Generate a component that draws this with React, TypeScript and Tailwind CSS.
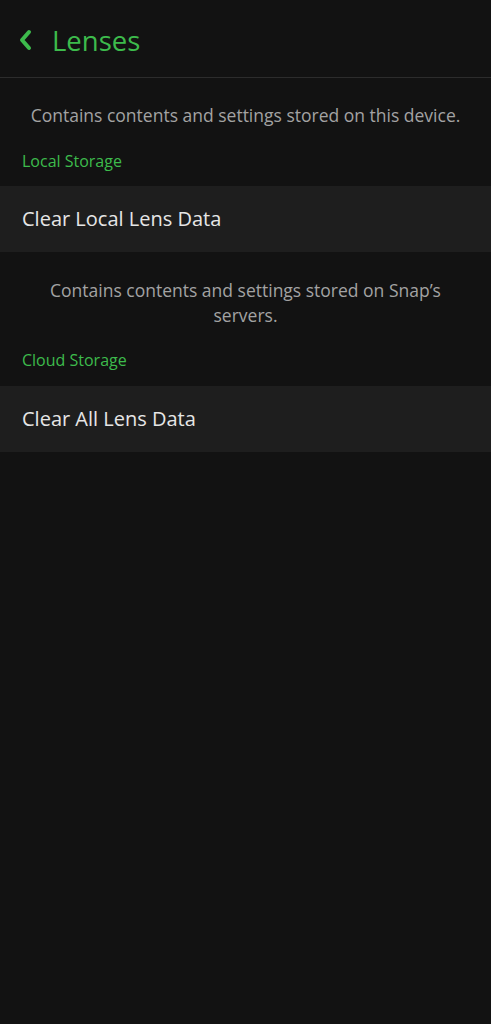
import React from "react";

export default function App() {
  return (
    <div className="min-h-[1024px] w-full bg-[#121212] font-['Open_Sans','Noto_Sans',sans-serif]">
      <div className="flex h-[78px] items-center border-b border-[#2c2c2c] pl-[17px]">
        <svg width="16" height="24" viewBox="0 0 16 24" className="mt-[3px]">
          <path d="M12 4 L5 12 L12 20" fill="none" stroke="#3dbb4c" strokeWidth="4" strokeLinecap="round" strokeLinejoin="round" />
        </svg>
        <span className="ml-[19px] mt-[4px] text-[27.5px] leading-[36px] text-[#3dbb4c]">Lenses</span>
      </div>
      <p className="px-[22px] pt-[25px] text-center text-[17.5px] leading-[25px] text-[#a3a3a3]">
        Contains contents and settings stored on this device.
      </p>
      <div className="px-[22px] pt-[25px] pb-[17px] text-[16px] leading-[16px] text-[#3dbb4c]">Local Storage</div>
      <div className="flex h-[66px] items-center bg-[#1e1e1e] px-[22px] text-[20px] text-[#e6e6e6]">Clear Local Lens Data</div>
      <p className="px-[22px] pt-[26px] text-center text-[17.5px] leading-[25px] text-[#a3a3a3]">
        Contains contents and settings stored on Snap’s servers.
      </p>
      <div className="px-[22px] pt-[24px] pb-[18px] text-[16px] leading-[16px] text-[#3dbb4c]">Cloud Storage</div>
      <div className="flex h-[66px] items-center bg-[#1e1e1e] px-[22px] text-[20px] text-[#e6e6e6]">Clear All Lens Data</div>
    </div>
  );
}
